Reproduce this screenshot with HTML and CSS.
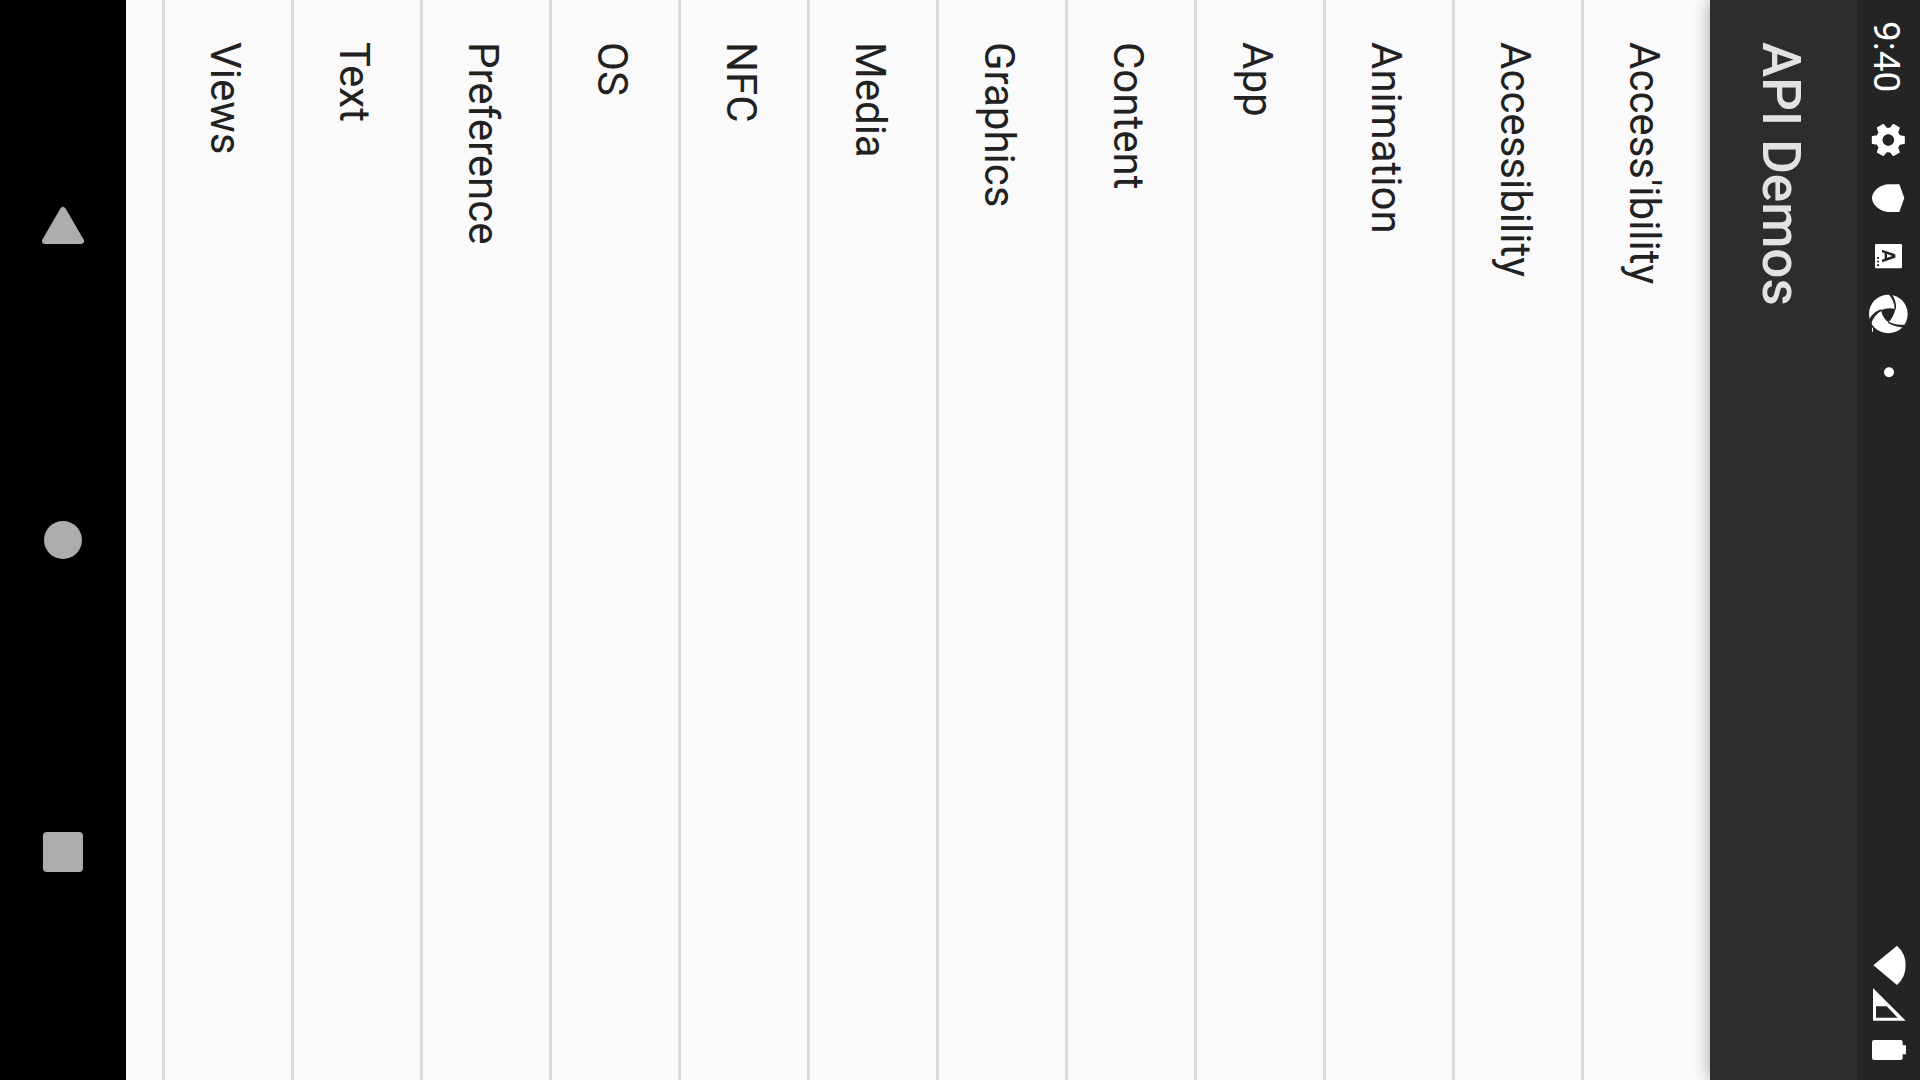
FILE: index.html
```html
<!DOCTYPE html>
<html lang="en">
<head>
<meta charset="utf-8">
<title>API Demos</title>
<link rel="stylesheet" href="styles.css">
</head>
<body>
<div class="status-bar">
  <time class="clock">9:40</time>
  <div class="status-icons">
    <svg class="icon" viewBox="51 333 189 174" aria-hidden="true"><path transform="translate(145 420) rotate(90) scale(4.95) translate(-12 -12)" d="M19.43 12.98c.04-.32.07-.64.07-.98s-.03-.66-.07-.98l2.11-1.65c.19-.15.24-.42.12-.64l-2-3.46c-.12-.22-.39-.3-.61-.22l-2.49 1c-.52-.4-1.08-.73-1.69-.98l-.38-2.65C14.46 2.18 14.25 2 14 2h-4c-.25 0-.46.18-.49.42l-.38 2.65c-.61.25-1.17.59-1.69.98l-2.49-1c-.23-.09-.49 0-.61.22l-2 3.46c-.13.22-.07.49.12.64l2.11 1.65c-.04.32-.07.65-.07.98s.03.66.07.98l-2.11 1.65c-.19.15-.24.42-.12.64l2 3.46c.12.22.39.3.61.22l2.49-1c.52.4 1.08.73 1.69.98l.38 2.65c.03.24.24.42.49.42h4c.25 0 .46-.18.49-.42l.38-2.65c.61-.25 1.17-.59 1.69-.98l2.49 1c.23.09.49 0 .61-.22l2-3.46c.12-.22.07-.49-.12-.64l-2.11-1.65zM12 15.5c-1.93 0-3.5-1.57-3.5-3.5s1.57-3.5 3.5-3.5 3.5 1.57 3.5 3.5-1.57 3.5-3.5 3.5z"/></svg>
    <svg class="icon" viewBox="51 -33 189 174" aria-hidden="true"><path d="M178 13L193 54L178 96H148C120 96 96 74 96 54S120 13 148 13Z"/></svg>
    <svg class="icon" viewBox="51 141 189 174" aria-hidden="true"><path fill-rule="evenodd" d="M109 192H182Q186 192 186 196V261Q186 265 182 265H109Q105 265 105 261V196Q105 192 109 192ZM126 209V217L134 220V236L126 239V247L166 233V223ZM141 222L157 228L141 233ZM111 231V236H117V231ZM111 242V247H117V242ZM111 253V258H117V253Z"/></svg>
    <svg class="icon" viewBox="51 315 189 174" aria-hidden="true"><circle cx="145" cy="402" r="58"/><path d="M96 443H99V455H96Z"/><g class="cut"><path d="M123 390Q144 382 166 387Q161 412 145 427Q127 413 123 390Z"/><path d="M145 341L155 341Q170 362 168 388L164 388Q164 362 145 341Z"/><path d="M204 434L198 443Q168 443 144 429L146 425Q172 437 204 434Z"/><path d="M86 420L94 432Q99 406 125 392L122 388Q99 396 86 420Z"/></g></svg>
    <svg class="icon" viewBox="51 489 189 174" aria-hidden="true"><circle cx="147" cy="577" r="15"/></svg>
  </div>
  <div class="system-icons">
    <svg class="icon-wifi" viewBox="51 60 189 138" aria-hidden="true"><path d="M100 136L171 77Q197 100 197 136T171 195Z"/></svg>
    <svg class="icon-small" viewBox="51 198 189 114" aria-hidden="true"><path fill-rule="evenodd" d="M99 204L197 302H99ZM108 259V293H173L140 259Z"/></svg>
    <svg class="icon-small" viewBox="51 312 189 114" aria-hidden="true"><path d="M102 360H182Q188 360 188 366V376H198V403H188V414Q188 420 182 420H102Q96 420 96 414V366Q96 360 102 360Z"/></svg>
  </div>
</div>
<header class="app-bar"><h1 class="title">API Demos</h1></header>
<main class="content">
  <ul class="list">
    <li><a class="row" href="#">Access'ibility</a></li>
    <li><a class="row" href="#">Accessibility</a></li>
    <li><a class="row" href="#">Animation</a></li>
    <li><a class="row" href="#">App</a></li>
    <li><a class="row" href="#">Content</a></li>
    <li><a class="row" href="#">Graphics</a></li>
    <li><a class="row" href="#">Media</a></li>
    <li><a class="row" href="#">NFC</a></li>
    <li><a class="row" href="#">OS</a></li>
    <li><a class="row" href="#">Preference</a></li>
    <li><a class="row" href="#">Text</a></li>
    <li><a class="row" href="#">Views</a></li>
  </ul>
</main>
<nav class="nav-bar" aria-label="System navigation">
  <button class="nav-button" type="button" aria-label="Back"><svg class="nav-icon" viewBox="0 0 126 126" aria-hidden="true"><path class="rounded" d="M63 45L81 76H45Z"/></svg></button>
  <button class="nav-button" type="button" aria-label="Home"><svg class="nav-icon" viewBox="0 0 126 126" aria-hidden="true"><circle cx="63" cy="63" r="19"/></svg></button>
  <button class="nav-button" type="button" aria-label="Recent apps"><svg class="nav-icon" viewBox="0 0 126 126" aria-hidden="true"><rect x="43" y="43" width="40" height="40" rx="4"/></svg></button>
</nav>
</body>
</html>
```
FILE: styles.css
```css
* {
  box-sizing: border-box;
}

body {
  display: flex;
  flex-direction: row-reverse;
  height: 100vh;
  margin: 0;
  overflow: hidden;
  background: #fafafa;
  color: #212121;
  font-family: Roboto, "Noto Sans", sans-serif;
}

/* The screen is turned a quarter clockwise: text runs top to bottom. */
.status-bar,
.app-bar,
.content {
  writing-mode: vertical-rl;
}

.status-bar {
  position: relative;
  z-index: 2;
  display: flex;
  justify-content: space-between;
  flex: none;
  width: 63px;
  padding: 21px 0 18px;
  background: #242424;
  color: #fff;
}

.clock {
  height: 90px;
  padding-right: 4px;
  font-size: 37px;
  line-height: 59px;
}

.status-icons {
  display: flex;
  flex: 1;
}

.system-icons {
  display: flex;
}

.icon,
.icon-wifi,
.icon-small {
  display: block;
  width: 63px;
  fill: #fff;
}

.icon {
  height: 58px;
}

.icon-wifi {
  height: 46px;
}

.icon-small {
  height: 38px;
}

.cut {
  fill: #242424;
}

.app-bar {
  position: relative;
  z-index: 1;
  flex: none;
  width: 147px;
  padding: 42px 6px 0 0;
  background: #2d2d2d;
  box-shadow: 0 0 16px rgba(0, 0, 0, 0.36);
  color: #e2e2e2;
}

.title {
  margin: 0;
  font-size: 53px;
  font-weight: 500;
  line-height: 141px;
}

.content {
  flex: 1;
}

.list {
  margin: 0;
  padding: 0;
  list-style: none;
}

.row {
  display: block;
  height: 100vh;
  padding: 42px 6px 0 0;
  border-left: 3px solid #dadada;
  color: inherit;
  font-size: 42px;
  line-height: 120px;
  text-decoration: none;
}

.nav-bar {
  display: flex;
  flex-direction: column;
  justify-content: center;
  flex: none;
  width: 126px;
  padding: 72px 0;
  background: #000;
}

.nav-button {
  display: flex;
  align-items: center;
  justify-content: center;
  flex: 1;
  padding: 0;
  border: 0;
  background: none;
}

.nav-icon {
  width: 126px;
  height: 126px;
  fill: #adadad;
}

.rounded {
  stroke: #adadad;
  stroke-width: 6;
  stroke-linejoin: round;
}
```
